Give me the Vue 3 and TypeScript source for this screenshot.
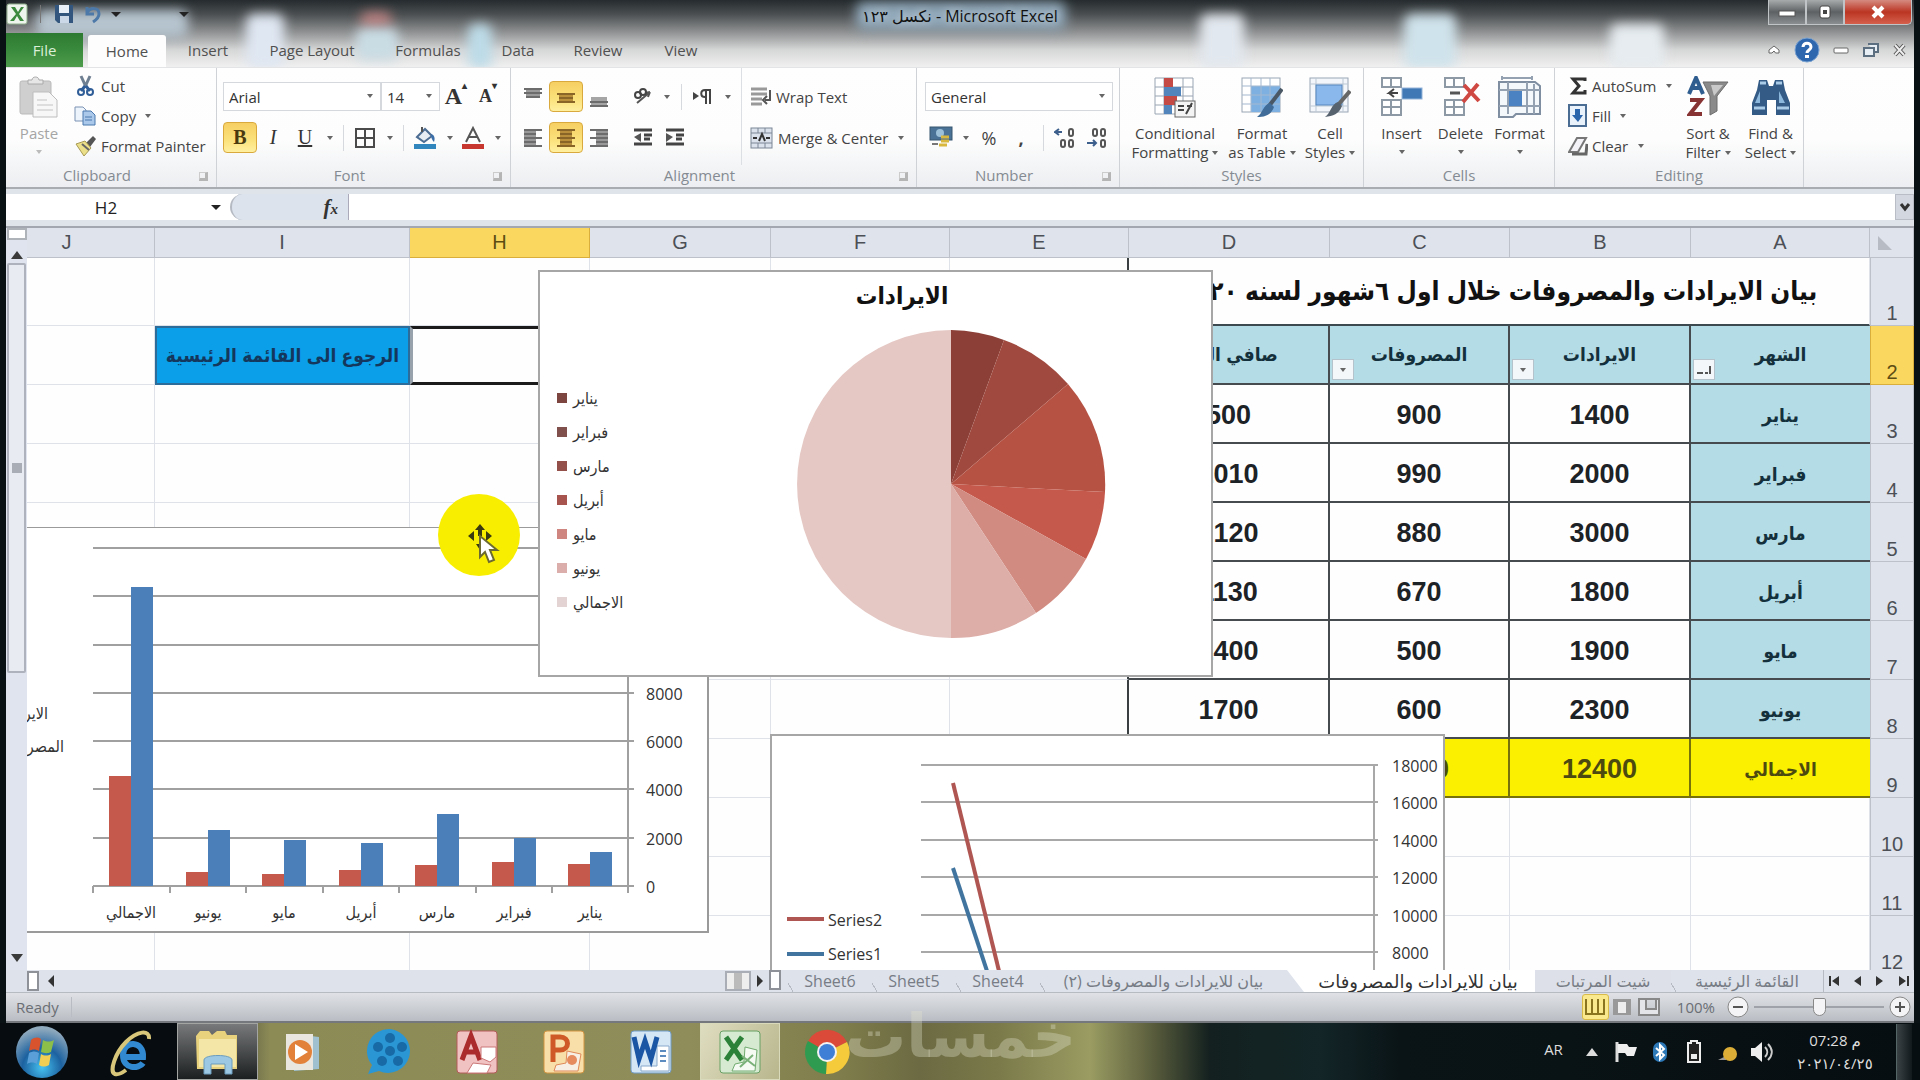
<script setup lang="ts">
interface SheetRow {
  num: number
  cells: string[]
  kind: 'head' | 'data' | 'total' | 'blank'
}

const columns: string[] = ['J', 'I', 'H', 'G', 'F', 'E', 'D', 'C', 'B', 'A']
const ribbonTabs: string[] = ['Insert', 'Page Layout', 'Formulas', 'Data', 'Review', 'View']

// Cells are listed in visual order: D, C, B, A
const rows: SheetRow[] = [
  { num: 2, kind: 'head', cells: ['صافي الربح', 'المصروفات', 'الايرادات', 'الشهر'] },
  { num: 3, kind: 'data', cells: ['500', '900', '1400', 'يناير'] },
  { num: 4, kind: 'data', cells: ['1010', '990', '2000', 'فبراير'] },
  { num: 5, kind: 'data', cells: ['2120', '880', '3000', 'مارس'] },
  { num: 6, kind: 'data', cells: ['1130', '670', '1800', 'أبريل'] },
  { num: 7, kind: 'data', cells: ['1400', '500', '1900', 'مايو'] },
  { num: 8, kind: 'data', cells: ['1700', '600', '2300', 'يونيو'] },
  { num: 9, kind: 'total', cells: ['7860', '4540', '12400', 'الاجمالي'] },
  { num: 10, kind: 'blank', cells: ['', '', '', ''] },
  { num: 11, kind: 'blank', cells: ['', '', '', ''] },
  { num: 12, kind: 'blank', cells: ['', '', '', ''] },
]

const months: string[] = ['يناير', 'فبراير', 'مارس', 'أبريل', 'مايو', 'يونيو', 'الاجمالي']
const income: number[] = [1400, 2000, 3000, 1800, 1900, 2300, 12400]
const expenses: number[] = [900, 990, 880, 670, 500, 600, 4540]

const pieColors: string[] = ['#8b3f36', '#a04a3f', '#b65243', '#c5594b', '#d18b81', '#ddada7', '#e5c8c4']
const legendColors: string[] = ['#7d4540', '#80504c', '#93504b', '#a8544e', '#cf8580', '#dcaeab', '#e3d4d3']
const pieTotal = income.reduce((a, b) => a + b, 0)
const slices = income.map((value, i) => {
  const before = income.slice(0, i).reduce((a, b) => a + b, 0)
  const a0 = (before / pieTotal) * Math.PI * 2
  const a1 = ((before + value) / pieTotal) * Math.PI * 2
  const r = 154
  const pt = (a: number): string => `${Math.round(413 + r * Math.sin(a))} ${Math.round(214 - r * Math.cos(a))}`
  return { d: `M413 214L${pt(a0)}A${r} ${r} 0 0 1 ${pt(a1)}Z`, color: pieColors[i] }
})

const base = 359
const scale = (v: number): number => Math.round((v * 338) / 14000)
const bars = months.map((name, i) => {
  const slot = 66 + Math.round((6 - i) * 76.5)
  return { name, slot, low: scale(expenses[i]), high: scale(income[i]) }
})
const barLines = [14000, 12000, 10000, 8000, 6000, 4000, 2000, 0].map((v) => ({ v, y: base - scale(v) }))
const lineTicks = [18000, 16000, 14000, 12000, 10000, 8000].map((v, i) => ({ v, y: 31 + Math.round(i * 37.4) }))
</script>

<template>
  <div class="desktop">
    <div class="window">
      <header class="chrome">
        <i class="spot s1"></i><i class="spot s2"></i><i class="spot s3"></i><i class="spot s4"></i>
        <i class="spot s5"></i><i class="spot s6"></i><i class="spot s7"></i><i class="spot s8"></i><i class="spot s9"></i>
        <div class="titlebar">
          <div class="quick">
            <svg width="22" height="22" viewBox="0 0 22 22"><rect x="1" y="1" width="20" height="20" rx="2" fill="#eef5ec" stroke="#8fae8c" /><path d="M5 4h4l3 5 3-5h3l-5 7 5 7h-4l-3-5-3 5H4l6-7z" fill="#3c8a3e" /></svg>
            <span class="vsep"></span>
            <button class="plain" aria-label="Save"><svg width="22" height="22" viewBox="0 0 22 22"><path d="M2 2h18v18H5l-3-3z" fill="#33567f" /><rect x="6" y="2" width="10" height="8" fill="#e9f0f8" /><rect x="7" y="13" width="9" height="7" fill="#cbd8e8" /></svg></button>
            <button class="plain" aria-label="Undo"><svg width="20" height="20" viewBox="0 0 20 20"><path d="M4 3v7h7M4 9c3-6 12-6 12 1 0 4-3 6-6 8" fill="none" stroke="#4d79a8" stroke-width="3" /></svg></button>
            <i class="caret dark"></i>
            <i class="caret dark far"></i>
          </div>
          <h1>نكسل ١٢٣ - Microsoft Excel</h1>
          <div class="wincontrols">
            <button aria-label="Minimize"><svg width="18" height="12" viewBox="0 0 18 12"><rect x="1" y="5" width="16" height="5" fill="#fff" stroke="#555" /></svg></button>
            <button aria-label="Maximize"><svg width="16" height="16" viewBox="0 0 16 16"><rect x="3" y="2" width="10" height="12" rx="2" fill="#fff" stroke="#444" /><path d="M6 6h4v4H6z" fill="#444" /></svg></button>
            <button class="close" aria-label="Close"><svg width="16" height="14" viewBox="0 0 16 14"><path d="M3 2l10 10M13 2L3 12" stroke="#fff" stroke-width="4" /></svg></button>
          </div>
        </div>
        <nav class="tabs">
          <button class="file">File</button>
          <button class="home">Home</button>
          <button v-for="t in ribbonTabs" :key="t" :class="'t-' + t.slice(0, 4).toLowerCase()">{{ t }}</button>
          <div class="docs">
            <svg width="16" height="16" viewBox="0 0 16 16"><path d="M3 11V8l5-4 5 4v3H9.500L8 9l-2 2z" fill="#fff" stroke="#666" /></svg>
            <svg width="26" height="26" viewBox="0 0 26 26"><circle cx="13" cy="13" r="12" fill="#2f67ae" stroke="#7ba3d2" /><path d="M9 10c0-5 8-5 8 0 0 3-4 3-4 6" fill="none" stroke="#fff" stroke-width="3" /><rect x="11" y="18" width="4" height="3" fill="#fff" /></svg>
            <svg width="18" height="16" viewBox="0 0 18 16"><rect x="2" y="6" width="14" height="5" rx="1" fill="#fff" stroke="#666" /></svg>
            <svg width="18" height="16" viewBox="0 0 18 16"><path d="M6 2h10v8h-3M2 6h10v8H2z" fill="#e8f0f6" stroke="#5b6f80" stroke-width="2" /></svg>
            <svg width="16" height="16" viewBox="0 0 16 16"><path d="M3 3l9 10M12 3L3 13" stroke="#555" stroke-width="4" /><path d="M3 3l9 10M12 3L3 13" stroke="#eee" stroke-width="2" /></svg>
          </div>
        </nav>
      </header>

      <section class="ribbon">
        <div class="group g-clip">
          <div class="body">
            <button class="big paste">
              <svg width="40" height="42" viewBox="0 0 40 42"><rect x="1" y="5" width="31" height="33" rx="2" fill="#cfcfcf" stroke="#b9b9b9" /><path d="M9 8V4h4c0-4 7-4 7 0h4v4z" fill="#e6e6e6" stroke="#aaa" /><path d="M14 16h16l8 8v17H14z" fill="#f7f7f7" stroke="#bdbdbd" /><path d="M18 24h10M18 29h16M18 34h16" stroke="#ddd" stroke-width="2" /></svg>
              <span>Paste</span><i class="caret pale"></i>
            </button>
            <div class="stack">
              <button class="line"><svg width="24" height="22" viewBox="0 0 24 22"><path d="M8 1l5 11M17 1l-5 11" stroke="#6f7f92" stroke-width="3" /><path d="M12 11l-4 5M13 11l4 5" stroke="#2f5d97" stroke-width="3" /><circle cx="8" cy="17" r="3" fill="none" stroke="#2f5d97" stroke-width="2" /><circle cx="17" cy="17" r="3" fill="none" stroke="#2f5d97" stroke-width="2" /></svg>Cut</button>
              <button class="line"><svg width="24" height="22" viewBox="0 0 24 22"><path d="M2 2h8l3 3v11H2z" fill="#eef4fb" stroke="#7b93b4" /><path d="M10 6h8l4 4v10H10z" fill="#a9c8ea" stroke="#4b78ae" /><path d="M12 12h7M12 15h7" stroke="#4b78ae" /></svg>Copy<i class="caret"></i></button>
              <button class="line"><svg width="24" height="22" viewBox="0 0 24 22"><path d="M13 8l7-7 3 3-6 8z" fill="#555" /><path d="M3 9l9-3 6 7-7 8z" fill="#ecdf8a" stroke="#a79a54" /><path d="M9 9l7 6" stroke="#666" stroke-width="2" /></svg>Format Painter</button>
            </div>
          </div>
          <div class="label">Clipboard<i class="launch"></i></div>
        </div>

        <div class="group g-font">
          <div class="body rows">
            <div class="row">
              <span class="combo w-face"><select aria-label="Font"><option>Arial</option></select><i class="caret"></i></span>
              <span class="combo w-size"><select aria-label="Font size"><option>14</option></select><i class="caret"></i></span>
              <button class="ic serif grow">A<sup>▴</sup></button>
              <button class="ic serif shrink">A<sup>▾</sup></button>
            </div>
            <div class="row">
              <button class="ic on serif"><b>B</b></button>
              <button class="ic serif"><i>I</i></button>
              <button class="ic serif"><u>U</u></button>
              <i class="caret wide"></i><span class="sep"></span>
              <button class="ic" aria-label="Borders"><svg width="20" height="20" viewBox="0 0 20 20"><path d="M1 1h18v18H1zM10 1v18M1 10h18" fill="none" stroke="#4a4a4a" stroke-width="2" /></svg></button>
              <i class="caret wide"></i><span class="sep"></span>
              <button class="ic" aria-label="Fill color"><svg width="24" height="24" viewBox="0 0 24 24"><path d="M4 11l8-8 7 7-8 6z" fill="#e8edf3" stroke="#4d6d93" stroke-width="2" /><path d="M9 6V1" stroke="#555" stroke-width="2" /><path d="M18 8c4 1 4 5 3 8-2-2-3-4-3-8z" fill="#3a6ea8" /><rect x="1" y="18" width="22" height="5" fill="#3187bd" /></svg></button>
              <i class="caret wide"></i>
              <button class="ic" aria-label="Font color"><svg width="24" height="24" viewBox="0 0 24 24"><path d="M5 16L12 2l7 14M8 11h8" fill="none" stroke="#555" stroke-width="2" /><rect x="1" y="18" width="22" height="5" fill="#c7372f" /></svg></button>
              <i class="caret wide"></i>
            </div>
          </div>
          <div class="label">Font<i class="launch"></i></div>
        </div>

        <div class="group g-align">
          <div class="body">
            <div class="rows half">
              <div class="row">
                <button class="ic" aria-label="Top align"><svg width="20" height="22" viewBox="0 0 20 22"><path d="M3 4h14v8H3z" fill="#9a9a9a" /><path d="M1 3h18M1 7h18M3 11h14" stroke="#6c6c6c" stroke-width="2" /></svg></button>
                <button class="ic on" aria-label="Middle align"><svg width="20" height="22" viewBox="0 0 20 22"><path d="M3 7h14v10H3z" fill="#b98f3c" /><path d="M1 8h18M3 12h14M1 16h18" stroke="#8a6528" stroke-width="2" /></svg></button>
                <button class="ic" aria-label="Bottom align"><svg width="20" height="22" viewBox="0 0 20 22"><path d="M2 11h16v9H2z" fill="#a5a5a5" /><path d="M1 16h18M1 20h18" stroke="#6c6c6c" stroke-width="2" /></svg></button>
                <button class="ic push" aria-label="Orientation"><svg width="22" height="22" viewBox="0 0 22 22"><path d="M5 17L18 6M18 6l-5 1M18 6l-2 5" stroke="#555" stroke-width="2" fill="none" /><circle cx="6" cy="9" r="3" fill="none" stroke="#444" stroke-width="2" /><circle cx="11" cy="6" r="3" fill="none" stroke="#444" stroke-width="2" /></svg></button>
                <i class="caret"></i><span class="sep"></span>
                <button class="ic" aria-label="Text direction"><svg width="22" height="20" viewBox="0 0 22 20"><path d="M1 5l6 4-6 4z" fill="#444" /><path d="M19 3h-6c-5 0-5 7 0 7M14 3v14M18 3v14" fill="none" stroke="#444" stroke-width="2" /></svg></button>
                <i class="caret wide"></i>
              </div>
              <div class="row">
                <button class="ic" aria-label="Align left"><svg width="20" height="22" viewBox="0 0 20 22"><path d="M1 3h12v16H1z" fill="#999" /><path d="M1 3h18M1 7h12M1 11h18M1 15h12M1 19h18" stroke="#6c6c6c" stroke-width="2" /></svg></button>
                <button class="ic on" aria-label="Center"><svg width="20" height="22" viewBox="0 0 20 22"><path d="M4 3h12v16H4z" fill="#b98f3c" /><path d="M1 3h18M4 7h12M1 11h18M4 15h12M1 19h18" stroke="#8a6528" stroke-width="2" /></svg></button>
                <button class="ic" aria-label="Align right"><svg width="20" height="22" viewBox="0 0 20 22"><path d="M7 3h12v16H7z" fill="#999" /><path d="M1 3h18M7 7h12M1 11h18M7 15h12M1 19h18" stroke="#6c6c6c" stroke-width="2" /></svg></button>
                <button class="ic push" aria-label="Decrease indent"><svg width="22" height="20" viewBox="0 0 22 20"><path d="M2 2h18M12 7h8M12 11h6M2 16h18" stroke="#444" stroke-width="3" /><path d="M9 5v9L2 9z" fill="#555" /></svg></button>
                <button class="ic" aria-label="Increase indent"><svg width="22" height="20" viewBox="0 0 22 20"><path d="M2 2h18M12 7h8M12 11h6M2 16h18" stroke="#444" stroke-width="3" /><path d="M2 5v9l7-5z" fill="#555" /></svg></button>
              </div>
            </div>
            <div class="rows merge">
              <div class="row"><button class="line"><svg width="22" height="22" viewBox="0 0 22 22"><path d="M1 3h16M1 8h16M1 13h11M1 18h11" stroke="#999" stroke-width="3" /><path d="M20 4v10h-5M17 10l-4 4 4 4" fill="none" stroke="#555" stroke-width="2" /></svg>Wrap Text</button></div>
              <div class="row"><button class="line"><svg width="24" height="22" viewBox="0 0 24 22"><rect x="1" y="1" width="21" height="20" fill="#dbe2ec" stroke="#7c8796" /><path d="M1 6h21M1 16h21M8 1v5M15 1v5M8 16v5M15 16v5" stroke="#7c8796" /><path d="M3 11h4M20 11h-4M9 14l3-7 3 7" stroke="#333" stroke-width="2" fill="none" /></svg>Merge &amp; Center<i class="caret wide"></i></button></div>
            </div>
          </div>
          <div class="label">Alignment<i class="launch"></i></div>
        </div>

        <div class="group g-num">
          <div class="body rows">
            <div class="row"><span class="combo w-num"><select aria-label="Number format"><option>General</option></select><i class="caret"></i></span></div>
            <div class="row">
              <button class="ic" aria-label="Accounting format"><svg width="24" height="26" viewBox="0 0 24 26"><rect x="1" y="2" width="22" height="13" fill="#4a7296" stroke="#36566f" /><circle cx="11" cy="8" r="4" fill="#9cc0d8" /><path d="M12 12h8M12 16h8M10 20h8" stroke="#d9b840" stroke-width="3" /><path d="M3 19h6" stroke="#777" stroke-width="2" /></svg></button>
              <i class="caret wide"></i>
              <button class="ic pct">%</button>
              <button class="ic pct"><b>,</b></button>
              <span class="sep"></span>
              <button class="ic tiny" aria-label="Increase decimal"><svg width="22" height="22" viewBox="0 0 22 22"><path d="M8 5H1l4-3M1 5l4 3" stroke="#3c5f8c" stroke-width="2" fill="none" /><rect x="15" y="2" width="4" height="7" rx="2" fill="none" stroke="#555" stroke-width="2" /><rect x="7" y="13" width="4" height="7" rx="2" fill="none" stroke="#555" stroke-width="2" /><rect x="15" y="13" width="4" height="7" rx="2" fill="none" stroke="#555" stroke-width="2" /></svg></button>
              <button class="ic tiny" aria-label="Decrease decimal"><svg width="22" height="22" viewBox="0 0 22 22"><rect x="7" y="2" width="4" height="7" rx="2" fill="none" stroke="#555" stroke-width="2" /><rect x="15" y="2" width="4" height="7" rx="2" fill="none" stroke="#555" stroke-width="2" /><path d="M1 16h9M7 13l3 3-3 3" stroke="#3c5f8c" stroke-width="2" fill="none" /><rect x="15" y="13" width="4" height="7" rx="2" fill="none" stroke="#555" stroke-width="2" /></svg></button>
            </div>
          </div>
          <div class="label">Number<i class="launch"></i></div>
        </div>

        <div class="group g-styles">
          <div class="body">
            <button class="big b-cond">
              <svg width="42" height="42" viewBox="0 0 42 42"><path d="M1 2h38v36H1zM1 11h38M1 20h38M1 29h38M10 2v36M29 2v36" fill="#fff" stroke="#9aa5b3" /><rect x="10" y="2" width="9" height="9" fill="#c44a45" /><rect x="10" y="11" width="17" height="9" fill="#5185bb" /><rect x="10" y="20" width="13" height="9" fill="#c44a45" /><rect x="10" y="29" width="8" height="9" fill="#5185bb" /><rect x="21" y="25" width="20" height="16" fill="#f4f4f4" stroke="#666" /><path d="M24 30h6M24 34h6M32 38l6-11M33 30h5" stroke="#444" stroke-width="2" /></svg>
              <span>Conditional</span><span>Formatting <i class="caret"></i></span>
            </button>
            <button class="big b-fmt">
              <svg width="42" height="42" viewBox="0 0 42 42"><rect x="1" y="2" width="38" height="34" fill="#fff" stroke="#9aa5b3" /><rect x="10" y="10" width="29" height="26" fill="#7fb0e2" /><path d="M1 10h38M1 19h38M1 28h38M10 2v34M20 2v34M29 2v34" stroke="#a3b7cf" /><path d="M41 13L28 30" stroke="#4a5866" stroke-width="4" /><path d="M29 27l4 4c-3 8-9 10-17 10 6-4 6-12 13-14z" fill="#3f6c98" /></svg>
              <span>Format</span><span>as Table <i class="caret"></i></span>
            </button>
            <button class="big b-cell">
              <svg width="42" height="42" viewBox="0 0 42 42"><rect x="1" y="2" width="38" height="34" fill="#f3f6fa" stroke="#9aa5b3" /><path d="M1 8h38M1 30h38M7 2v34M34 2v34" stroke="#bcc7d4" /><rect x="7" y="9" width="26" height="20" fill="#8ab8ec" stroke="#5486bd" /><path d="M41 15L29 29" stroke="#666" stroke-width="4" /><path d="M29 26l4 4c-3 8-9 10-17 11 6-4 6-13 13-15z" fill="#56626e" /></svg>
              <span>Cell</span><span>Styles <i class="caret"></i></span>
            </button>
          </div>
          <div class="label">Styles</div>
        </div>

        <div class="group g-cells">
          <div class="body">
            <button class="big">
              <svg width="42" height="42" viewBox="0 0 42 42"><path d="M1 2h19v9H1zM10 2v9M1 24h19v15H1zM10 24v15M1 31h19" fill="#fff" stroke="#8e99a6" stroke-width="2" /><rect x="21" y="12" width="20" height="11" fill="#3f78b5" stroke="#93b4d8" /><path d="M17 17H8l5-4M8 17l5 4" stroke="#444" stroke-width="2" fill="none" /></svg>
              <span>Insert</span><i class="caret"></i>
            </button>
            <button class="big">
              <svg width="42" height="42" viewBox="0 0 42 42"><path d="M5 2h19v9H5zM14 2v9M5 24h19v15H5zM14 24v15M5 31h19" fill="#fff" stroke="#8e99a6" stroke-width="2" /><path d="M10 17h10" stroke="#555" stroke-width="3" /><path d="M24 9l15 16M38 8L23 26" stroke="#cf4842" stroke-width="4" /></svg>
              <span>Delete</span><i class="caret"></i>
            </button>
            <button class="big">
              <svg width="44" height="42" viewBox="0 0 44 42"><path d="M1 6h36l5 4v28H18l-3 3H1z" fill="#f5f8fb" stroke="#7f8fa1" stroke-width="2" /><path d="M10 6v32M29 6v32M36 8v30M1 14h41M1 30h41M4 2h30M4 0v4M34 0v4" stroke="#93a1b1" stroke-width="2" /><rect x="11" y="15" width="13" height="15" fill="#4b82c2" /></svg>
              <span>Format</span><i class="caret"></i>
            </button>
          </div>
          <div class="label">Cells</div>
        </div>

        <div class="group g-edit">
          <div class="body">
            <div class="stack">
              <button class="line"><svg width="20" height="20" viewBox="0 0 20 20"><path d="M17 5V3H5l6 7-6 7h12v-3" fill="none" stroke="#333" stroke-width="3" /></svg>AutoSum<i class="caret wide"></i></button>
              <button class="line"><svg width="20" height="24" viewBox="0 0 20 24"><rect x="1" y="1" width="17" height="21" fill="#e9f1fa" stroke="#4b6c93" stroke-width="2" /><path d="M7 5h5v6h3l-5 7-6-7h3z" fill="#2a64aa" /></svg>Fill<i class="caret"></i></button>
              <button class="line"><svg width="20" height="20" viewBox="0 0 20 20"><path d="M9 2h9l-8 14H1z" fill="#f4f4f8" stroke="#777" stroke-width="2" /><path d="M4 18h14l1-10" stroke="#666" stroke-width="3" fill="none" /></svg>Clear<i class="caret wide"></i></button>
            </div>
            <button class="big b-sort">
              <svg width="42" height="42" viewBox="0 0 42 42"><path d="M16 6h25L30 20v15l-7 4V20z" fill="#8a8a8a" stroke="#6d6d6d" /><path d="M24 9h12l-9 11" fill="#c9c9c9" /><path d="M2 18L9 2l7 16M5 12h8" fill="none" stroke="#2f5d90" stroke-width="4" /><path d="M3 24h11L3 38h12" fill="none" stroke="#833" stroke-width="4" /></svg>
              <span>Sort &amp;</span><span>Filter <i class="caret"></i></span>
            </button>
            <button class="big b-find">
              <svg width="42" height="42" viewBox="0 0 42 42"><path d="M9 4h8l2 6h4l2-6h8l2 10 5 13v12H26V24h-9v15H2V27L7 14z" fill="#335b85" /><path d="M5 27l5-12v12M29 15l6 12h-6" fill="#8db8de" /><path d="M4 32h11M27 32h12M10 7h6M26 7h6" stroke="#a9cbe8" stroke-width="3" /></svg>
              <span>Find &amp;</span><span>Select <i class="caret"></i></span>
            </button>
          </div>
          <div class="label">Editing</div>
        </div>
      </section>

      <section class="formula">
        <div class="namebox"><input aria-label="Name box" value="H2"><i class="caret black"></i></div>
        <div class="fxarea"><i class="round"></i><em>f<small>x</small></em></div>
        <input class="fxinput" aria-label="Formula">
        <button class="expand" aria-label="Expand formula bar"><svg width="12" height="10" viewBox="0 0 12 10"><path d="M2 2l4 5 4-5" fill="none" stroke="#333" stroke-width="3" /></svg></button>
      </section>

      <section class="sheet">
        <div class="vscroll">
          <i class="split"></i><i class="up"></i>
          <div class="thumb"><i class="grip"></i></div>
          <i class="down"></i>
        </div>
        <div class="grid">
          <table>
            <colgroup>
              <col><col class="c255"><col class="c180"><col class="c181"><col class="c179"><col class="c179"><col class="c201"><col class="c180"><col class="c181"><col class="c179"><col class="c44">
            </colgroup>
            <thead>
              <tr><th v-for="c in columns" :key="c" scope="col" :class="{ sel: c === 'H' }">{{ c }}</th><th class="corner" aria-label="Select all"><i></i></th></tr>
            </thead>
            <tbody>
              <tr class="first">
                <td v-for="n in 5" :key="n"></td><td class="edge"></td>
                <td colspan="4" class="title" dir="rtl">بيان الايرادات والمصروفات خلال اول ٦شهور لسنه ٢٠٢٠</td>
                <th scope="row">1</th>
              </tr>
              <tr v-for="r in rows" :key="r.num" :class="r.kind">
                <td></td>
                <td v-if="r.num === 2" class="link"><a href="#home" dir="rtl">الرجوع الى القائمة الرئيسية</a></td><td v-else></td>
                <td :class="{ active: r.num === 2 }"></td>
                <td></td><td></td><td :class="{ edge: r.kind !== 'blank' }"></td>
                <td v-for="(c, i) in r.cells" :key="i" :class="{ month: i === 3 && r.kind !== 'blank', val: r.kind !== 'blank' }">
                  {{ c }}<button v-if="r.kind === 'head' && i > 0" class="filter" aria-label="Filter"><i v-if="i < 3" class="caret"></i><svg v-else width="16" height="14" viewBox="0 0 16 14"><path d="M1 10h6M9 10h3M14 3v8" stroke="#555" stroke-width="2" /></svg></button>
                </td>
                <th scope="row" :class="{ sel: r.num === 2 }">{{ r.num }}</th>
              </tr>
            </tbody>
          </table>

          <svg class="chart barchart" width="682" height="406" viewBox="0 0 682 406">
            <rect x="-1" y="0" width="682" height="405" fill="#fff" stroke="#9a9a9a" stroke-width="2" />
            <g stroke="#a0a0a0" stroke-width="2">
              <path v-for="l in barLines" :key="l.v" :d="`M66 ${l.y}H607`" />
              <path d="M601 21V366" />
              <path v-for="b in bars" :key="b.slot" :d="`M${b.slot} 359v7`" />
            </g>
            <g v-for="b in bars" :key="b.name">
              <rect :x="b.slot + 16" :y="base - b.low" width="22" :height="b.low" fill="#c5594b" />
              <rect :x="b.slot + 38" :y="base - b.high" width="22" :height="b.high" fill="#4a7fba" />
              <text :x="b.slot + 38" y="391" text-anchor="middle">{{ b.name }}</text>
            </g>
            <text v-for="l in barLines" :key="l.v" x="619" :y="l.y + 7">{{ l.v }}</text>
            <text x="21" y="192" text-anchor="end">الايرادات</text>
            <text x="37" y="225" text-anchor="end">المصروفات</text>
          </svg>

          <svg class="chart piechart" width="675" height="407" viewBox="0 0 675 407">
            <rect x="1" y="1" width="673" height="405" fill="#fff" stroke="#a6a6a6" stroke-width="2" />
            <text class="ctitle" x="364" y="34" text-anchor="middle">الايرادات</text>
            <path v-for="(s, i) in slices" :key="i" :d="s.d" :fill="s.color" />
            <g v-for="(m, i) in months" :key="m">
              <rect x="19" :y="123 + i * 34" width="10" height="10" :fill="legendColors[i]" />
              <text x="35" :y="134 + i * 34">{{ m }}</text>
            </g>
          </svg>

          <svg class="chart linechart" width="675" height="237" viewBox="0 0 675 237">
            <path d="M1 240V1H674V240" fill="#fff" stroke="#a6a6a6" stroke-width="2" />
            <g stroke="#a8a8a8" stroke-width="2">
              <path v-for="t in lineTicks" :key="t.v" :d="`M151 ${t.y}H608`" />
              <path d="M604 31V237" />
            </g>
            <path d="M183 49L229 237" stroke="#b05652" stroke-width="4" />
            <path d="M183 134L217 237" stroke="#41759f" stroke-width="4" />
            <path d="M17 185h37" stroke="#b05652" stroke-width="4" />
            <path d="M17 220h37" stroke="#41759f" stroke-width="4" />
            <text x="58" y="192">Series2</text>
            <text x="58" y="226">Series1</text>
            <text v-for="t in lineTicks" :key="t.v" x="622" :y="t.y + 7">{{ t.v }}</text>
          </svg>

          <svg class="pointer" width="84" height="84" viewBox="0 0 84 84">
            <circle cx="42" cy="42" r="41" fill="#f8ef00" />
            <path d="M43 31l5 6h-3v6h-4v-6h-3zM31 43l6-5v10zM55 43l-6-5v10zM43 57l-4-6h7z" fill="#3a3a10" />
            <path d="M43 43v21l5-5 4 10 5-2-4-10h7z" fill="#fff" stroke="#6c6a30" stroke-width="2" />
          </svg>
        </div>
      </section>

      <section class="sheettabs">
        <div class="hscroll"><i class="mini"></i><i class="left"></i><span class="fill"></span><i class="hthumb"></i><i class="right"></i></div>
        <i class="mini"></i>
        <button class="st">Sheet6</button><button class="st">Sheet5</button><button class="st">Sheet4</button>
        <button class="st wide" dir="rtl">بيان للايرادات والمصروفات (٢)</button>
        <button class="st current" dir="rtl">بيان للايرادات والمصروفات</button>
        <button class="st pay" dir="rtl">شيت المرتبات</button>
        <button class="st main" dir="rtl">القائمة الرئيسية</button>
        <div class="nav">
          <svg width="84" height="12" viewBox="0 0 84 12"><path d="M3 1v10M81 1v10" stroke="#333" stroke-width="2" /><path d="M12 1v10L5 6zM34 1v10l-7-5zM49 1v10l7-5zM72 1v10l7-5z" fill="#333" /></svg>
        </div>
      </section>

      <footer class="status">
        <span class="ready">Ready</span>
        <div class="view">
          <button class="vb on" aria-label="Normal view"><svg width="20" height="18" viewBox="0 0 20 18"><path d="M1 1v15h18V1M7 1v15M13 1v15" fill="none" stroke="#8b7420" stroke-width="2" /></svg></button>
          <button class="vb" aria-label="Page layout view"><svg width="20" height="18" viewBox="0 0 20 18"><rect x="1" y="1" width="18" height="16" fill="#999" /><rect x="6" y="4" width="8" height="11" fill="#eee" /></svg></button>
          <button class="vb" aria-label="Page break view"><svg width="22" height="18" viewBox="0 0 22 18"><path d="M1 1h20v16H1zM8 1v10h10V1" fill="#e3e5e8" stroke="#888" stroke-width="2" /></svg></button>
          <span class="pc">100%</span>
          <button class="zoom" aria-label="Zoom out"><svg width="22" height="22" viewBox="0 0 22 22"><circle cx="11" cy="11" r="10" fill="#f4f4f6" stroke="#888" /><path d="M6 11h10" stroke="#555" stroke-width="2" /></svg></button>
          <input type="range" aria-label="Zoom" min="0" max="100" value="50">
          <button class="zoom" aria-label="Zoom in"><svg width="22" height="22" viewBox="0 0 22 22"><circle cx="11" cy="11" r="10" fill="#f4f4f6" stroke="#888" /><path d="M6 11h10M11 6v10" stroke="#555" stroke-width="2" /></svg></button>
        </div>
      </footer>
    </div>

    <div class="taskbar">
      <button class="tk start" aria-label="Start"><svg width="54" height="54" viewBox="0 0 54 54"><defs><radialGradient id="orb" cx="50%" cy="80%" r="75%"><stop offset="0" stop-color="#45c1f0" /><stop offset="0.5" stop-color="#1c62a0" /><stop offset="1" stop-color="#8fa9bd" /></radialGradient></defs><circle cx="27" cy="27" r="26" fill="url(#orb)" /><path d="M16 15c4-3 7-3 10-1l-2 12c-3-2-7-2-10 0z" fill="#d9532c" /><path d="M28 15c4 2 7 2 11 0l-3 12c-4 2-7 1-10 0z" fill="#8cbf4a" /><path d="M14 28c4-2 7-2 10 0l-2 11c-3-2-7-2-10 0z" fill="#5a9fd8" /><path d="M26 29c3 2 7 2 10 0l-2 11c-4 2-7 2-10 0z" fill="#f2cf52" /></svg></button>
      <button class="tk ie" aria-label="Internet Explorer"><svg width="48" height="50" viewBox="0 0 48 50"><path d="M36 36c-4 6-20 7-20-8s21-15 20 2H19" fill="none" stroke="#3189d2" stroke-width="6" /><path d="M42 12c1-10-12-8-23 3S2 45 8 47c3 1 7-1 11-4" fill="none" stroke="#d8c77a" stroke-width="4" /></svg></button>
      <button class="tk folder" aria-label="Explorer"><svg width="48" height="48" viewBox="0 0 48 48"><path d="M2 8l4-5h9l3 4 5-4h8l2 4h10v34H3z" fill="#e9d27e" /><path d="M5 11h37v28H5z" fill="#f4e6a6" /><path d="M10 46V32c0-6 28-6 28 0v14h-7V36H17v10z" fill="#9cc8e4" stroke="#6b9cbd" /></svg></button>
      <button class="tk" aria-label="Media Player"><svg width="42" height="42" viewBox="0 0 42 42"><path d="M12 3l25 3v32l-25 2z" fill="#9fc0cf" /><rect x="4" y="3" width="27" height="36" fill="#e8e6df" /><circle cx="18" cy="21" r="12" fill="#e2813a" /><path d="M13 13l13 8-13 8z" fill="#fff" /></svg></button>
      <button class="tk" aria-label="Video"><svg width="48" height="48" viewBox="0 0 48 48"><path d="M24 1a22 22 0 1 1-11 42L2 46l4-9A22 22 0 0 1 24 1z" fill="#2a96d4" /><g fill="#176aa5"><circle cx="24" cy="23" r="5" /><circle cx="24" cy="10" r="5" /><circle cx="36" cy="19" r="5" /><circle cx="32" cy="33" r="5" /><circle cx="16" cy="33" r="5" /><circle cx="12" cy="19" r="5" /></g></svg></button>
      <button class="tk" aria-label="Access"><svg width="44" height="46" viewBox="0 0 44 46"><rect x="2" y="2" width="40" height="42" rx="3" fill="#f0c3c2" stroke="#b25a58" /><path d="M7 31L16 7l9 24M10 23h12" fill="none" stroke="#ab2a2c" stroke-width="5" /><path d="M26 18h15v10l-6 5-9-4zM18 34l18 2-4 8H12z" fill="#fff" stroke="#c77" /></svg></button>
      <button class="tk" aria-label="PowerPoint"><svg width="44" height="46" viewBox="0 0 44 46"><rect x="2" y="2" width="40" height="42" rx="3" fill="#f8dfa9" stroke="#d39541" /><path d="M11 33V8h7c10 0 10 13 0 13h-6" fill="none" stroke="#cf5a28" stroke-width="5" /><path d="M25 22l14 3-3 17H12l2-6 10-2z" fill="#f7efe4" stroke="#df8a58" /><circle cx="30" cy="31" r="5" fill="#e58b5d" /></svg></button>
      <button class="tk" aria-label="Word"><svg width="44" height="46" viewBox="0 0 44 46"><rect x="2" y="2" width="40" height="42" rx="3" fill="#d5e6f5" stroke="#6f9cc9" /><path d="M28 17h12v25H12v-5h16z" fill="#fff" stroke="#88a9cc" /><path d="M5 8l5 22 6-18 6 18 6-22" fill="none" stroke="#1b56a5" stroke-width="5" /><path d="M31 22h6M31 27h6M31 32h6" stroke="#5d8cc0" stroke-width="2" /></svg></button>
      <button class="tk excel" aria-label="Excel"><svg width="44" height="46" viewBox="0 0 44 46"><rect x="2" y="2" width="40" height="42" rx="3" fill="#d5ead0" stroke="#68a064" /><path d="M8 8l16 23M24 8L8 31" stroke="#2a8137" stroke-width="5" /><path d="M27 18l12 3-2 21H14l3-7 9-2z" fill="#f5faf3" stroke="#71ab6f" /><path d="M24 27l13 10M35 26L22 38" stroke="#79b179" stroke-width="2" /></svg></button>
      <button class="tk gc" aria-label="Chrome"><svg width="46" height="50" viewBox="0 0 46 50"><path d="M23 25L4 14A22 22 0 0 1 43 15z" fill="#db4a38" /><path d="M23 25l20-10A22 22 0 0 1 22 47z" fill="#f6cb3b" /><path d="M23 25l-1 22A22 22 0 0 1 4 14z" fill="#2f9b50" /><circle cx="23" cy="25" r="10" fill="#f3f3f3" /><circle cx="23" cy="25" r="8" fill="#3f7fd6" /></svg></button>
      <span class="mark">خمسات</span>
      <div class="tray">
        <span class="lang">AR</span>
        <i class="ti"><svg width="14" height="10" viewBox="0 0 14 10"><path d="M7 1l6 8H1z" fill="#ddd" /></svg></i>
        <i class="ti"><svg width="24" height="22" viewBox="0 0 24 22"><path d="M3 1v20" stroke="#ddd" stroke-width="3" /><path d="M4 3h9l2 3h8l-3 9h-7l-2-3H4z" fill="#eee" /></svg></i>
        <i class="ti"><svg width="16" height="22" viewBox="0 0 16 22"><rect x="1" y="1" width="14" height="20" rx="7" fill="#2d78b7" /><path d="M4 7l8 7-4 4V4l4 4-8 7" fill="none" stroke="#fff" stroke-width="2" /></svg></i>
        <i class="ti"><svg width="16" height="24" viewBox="0 0 16 24"><path d="M5 3V1h6v2h3v19H2V3z" fill="#222" stroke="#eee" stroke-width="2" /><path d="M5 14h6v5H5z" fill="#eee" /></svg></i>
        <i class="ti"><svg width="22" height="20" viewBox="0 0 22 20"><path d="M1 18h8v-4z" fill="#999" /><circle cx="13" cy="12" r="7" fill="#dcae37" /></svg></i>
        <i class="ti"><svg width="24" height="22" viewBox="0 0 24 22"><path d="M1 7h4l7-6v20l-7-6H1z" fill="#eee" /><path d="M15 6c3 3 3 7 0 10M18 3c5 5 5 11 0 16" stroke="#ccc" stroke-width="2" fill="none" /></svg></i>
        <div class="clock"><span>07:28 م</span><span>٢٠٢١/٠٤/٢٥</span></div>
        <i class="peek"></i>
      </div>
    </div>
  </div>
</template>

<style>
body { margin: 0; background: #0a1114; }
</style>

<style scoped>
* { box-sizing: border-box; }
.desktop { min-height: 100vh; display: flex; flex-direction: column; background: #0a1114; font-family: "Open Sans", "DejaVu Sans", sans-serif; font-size: 15px; color: #444; overflow: hidden; }
button { font: inherit; color: inherit; background: none; border: 0; padding: 0; margin: 0; }
svg { display: block; flex: none; }
.window { flex: 1; margin: 0 6px; display: flex; flex-direction: column; }
.caret { display: inline-block; flex: none; width: 0; height: 0; border: 3px solid transparent; border-top: 4px solid #666; border-bottom: 0; margin: 0 5px; }
.caret.wide { margin: 0 4px 0 6px; }
.caret.pale { border-top-color: #bbb; }
.caret.dark, .caret.black { border-width: 5px; border-top: 5px solid #222; border-bottom: 0; }

.chrome { position: relative; overflow: hidden; background: linear-gradient(#252b2e 0, #4a4e50 14px, #8f9192 32px, #d6d7d7 50px, #efefef 66px); }
.spot { position: absolute; filter: blur(6px); border-radius: 8px; }
.s1 { left: 240px; top: 14px; width: 38px; height: 54px; background: #dfe7f2; }
.s2 { left: 354px; top: 12px; width: 32px; height: 16px; background: #b77e7e; }
.s3 { left: 350px; top: 28px; width: 42px; height: 32px; background: #c9dce4; }
.s4 { left: 462px; top: 24px; width: 24px; height: 44px; background: #bcdbe8; }
.s5 { left: 30px; top: 10px; width: 152px; height: 28px; background: #b6c4cf; }
.s6 { left: 1194px; top: 14px; width: 44px; height: 54px; background: #e2e8ef; }
.s7 { left: 1398px; top: 14px; width: 52px; height: 54px; background: #cfe3ec; }
.s8 { left: 1604px; top: 24px; width: 54px; height: 44px; background: #e6ecf0; }
.s9 { left: 850px; top: 2px; width: 210px; height: 28px; background: #8ea6b8; }
.titlebar { position: relative; height: 33px; display: flex; justify-content: space-between; }
.quick { display: flex; align-items: center; width: 400px; gap: 8px; height: 28px; }
.quick .caret { margin-right: 0; margin-left: 0; }
.quick .caret.far { margin-left: 50px; }
.vsep { width: 1px; height: 18px; background: #777; margin: 0 4px; }
h1 { margin: 0; font-size: 16px; font-weight: 400; line-height: 33px; color: #111; text-shadow: 0 0 8px #dfe6ee; }
.wincontrols { width: 400px; display: flex; justify-content: flex-end; height: 25px; padding-right: 2px; }
.wincontrols button { width: 38px; display: flex; align-items: center; justify-content: center; background: linear-gradient(#a8abac, #5d6163 50%, #8b8e90); border: 1px solid #c0c4c6; border-top: 0; }
.wincontrols .close { width: 68px; background: linear-gradient(#d58a80, #bb3523 50%, #d4604c); border-radius: 0 0 5px 0; }
.tabs { position: relative; display: flex; height: 34px; align-items: stretch; color: #505050; }
.tabs button { display: flex; align-items: center; justify-content: center; white-space: nowrap; }
.tabs .file { width: 77px; background: linear-gradient(#2c7a31, #3a8a3d 50%, #4e9c4c); color: #dcefd9; }
.tabs .home { width: 78px; margin: 2px 0 0 5px; background: #fdfdfd; border-radius: 3px 3px 0 0; }
.t-inse { width: 84px; }
.t-page { width: 124px; }
.t-form { width: 108px; }
.t-data { width: 72px; }
.t-revi { width: 88px; }
.t-view { width: 78px; }
.docs { margin-left: auto; padding-right: 6px; display: flex; align-items: center; gap: 12px; }

.ribbon { display: flex; height: 122px; background: linear-gradient(#fefefe, #fdfdfd 60%, #eceef1); border-bottom: 2px solid #a9adb2; border-top: 1px solid #e3e4e6; }
.group { display: flex; flex-direction: column; border-right: 1px solid #cfd3d8; white-space: nowrap; flex: none; }
.g-clip { width: 211px; }
.g-font { width: 294px; }
.g-align { width: 406px; }
.g-num { width: 203px; }
.g-styles { width: 244px; }
.g-cells { width: 191px; }
.g-edit { width: 249px; }
.body { height: 97px; display: flex; }
.rows { display: flex; flex-direction: column; gap: 10px; padding-top: 13px; }
.g-font .rows { padding-left: 6px; }
.row { display: flex; align-items: center; height: 31px; }
.label { position: relative; height: 22px; line-height: 20px; text-align: center; color: #858b92; padding-right: 28px; }
.g-styles .label, .g-cells .label, .g-edit .label { padding-right: 0; }
.launch { position: absolute; right: 8px; top: 7px; width: 9px; height: 9px; border: 1px solid #ccc; border-right: 3px solid #b5b5b5; border-bottom: 3px solid #b5b5b5; }
.stack { display: flex; flex-direction: column; padding-top: 3px; }
.g-clip .stack { padding-left: 1px; }
.g-edit .stack { padding-left: 13px; width: 120px; }
.line { display: flex; align-items: center; gap: 4px; height: 31px; }
.stack .line { height: 30px; }
.big { display: flex; flex-direction: column; align-items: center; padding-top: 8px; width: 59px; line-height: 19px; }
.big svg { margin-bottom: 6px; }
.big > .caret { margin-top: 7px; }
.big span .caret { margin: 0 0 3px; }
.paste { width: 66px; color: #a5a5a5; }
.b-cond { width: 98px; margin-left: 6px; }
.b-fmt { width: 76px; }
.b-cell { width: 60px; }
.g-cells .body { padding-left: 8px; }
.b-sort { width: 66px; }
.combo { position: relative; display: flex; height: 29px; }
.combo select { appearance: none; width: 100%; border: 1px solid #d5d9de; background: #fff; font: inherit; color: #333; padding: 0 5px; border-radius: 0; }
.combo .caret { position: absolute; right: 3px; top: 12px; }
.w-face { width: 158px; }
.w-size { width: 59px; }
.g-num .rows { padding-left: 8px; }
.w-num { width: 188px; }
.ic { width: 32px; height: 31px; display: flex; align-items: center; justify-content: center; flex: none; }
.ic.on { width: 34px; border: 1px solid #d9a93d; border-radius: 4px; background: linear-gradient(#f6cf62, #fbe27c 60%, #fff0a0); }
.g-font .ic.on { color: #4a3a10; }
.serif { font-family: "Liberation Serif", serif; font-size: 20px; color: #333; }
.grow { font-size: 24px; font-weight: 700; }
.shrink { font-size: 18px; font-weight: 700; }
.serif sup { font-size: 10px; line-height: 10px; align-self: flex-start; }
.sep { width: 1px; height: 26px; background: #d6d9dd; margin: 0 5px 0 6px; }
.push { margin-left: 12px; }
.half { width: 230px; padding-left: 6px; margin-bottom: 12px; }
.merge { padding-left: 8px; border-left: 1px solid #dcdfe3; }
.pct { font-size: 18px; }

.formula { display: flex; height: 39px; padding: 5px 0 6px; background: #dfe3ea; border-bottom: 2px solid #a3a8b0; }
.namebox { display: flex; align-items: center; width: 224px; background: #fff; }
.namebox input { flex: 1; min-width: 0; border: 0; padding: 0; text-align: center; font: 17px "Open Sans", sans-serif; color: #222; background: none; }
.namebox .caret { margin-right: 9px; }
.fxarea { flex: none; width: 119px; display: flex; justify-content: space-between; padding-right: 10px; background: linear-gradient(90deg, #fff 8px, #dde3ec 8px); border-right: 1px solid #aab; }
.round { width: 40px; border-radius: 14px 0 0 14px; background: #dde3ec; border-left: 2px solid #b5bac2; }
.fxarea em { font: italic bold 21px/26px "Liberation Serif", serif; color: #333; }
.fxarea small { font-size: 15px; }
.fxinput { flex: 1; border: 0; background: #fff; }
.expand { width: 19px; display: flex; align-items: center; justify-content: center; background: #d3d8e0; border: 1px solid #b9bec6; }

.sheet { flex: 1; display: flex; overflow: hidden; }
.vscroll { width: 21px; flex: none; background: #dfe4ee; display: flex; flex-direction: column; align-items: center; }
.split { width: 20px; height: 12px; background: #fff; border: 2px solid #aeb2b9; }
.up, .down { width: 0; height: 0; border: 6px solid transparent; }
.up { border-top: 0; border-bottom: 8px solid #3a3a3a; margin: 11px 0 4px; }
.down { border-bottom: 0; border-top: 8px solid #3a3a3a; margin: auto 0 8px; }
.thumb { width: 19px; height: 410px; background: #e9ebf2; border: 2px solid #aeb2bc; border-radius: 2px; display: flex; align-items: center; justify-content: center; }
.grip { width: 10px; height: 10px; background: #a9adb5; }
.grid { position: relative; flex: 1; background: #fefefe; overflow: hidden; }
table { width: 100%; margin-bottom: -5px; table-layout: fixed; border-collapse: separate; border-spacing: 0; font-family: "Liberation Sans", "DejaVu Sans Condensed", "DejaVu Sans", sans-serif; }
.c255 { width: 255px; }
.c201 { width: 201px; }
.c181 { width: 181px; }
.c180 { width: 180px; }
.c179 { width: 179px; }
.c44 { width: 44px; }
td, th { padding: 0; border: 0 solid #dfe2e8; border-right-width: 1px; border-bottom-width: 1px; overflow: hidden; white-space: nowrap; }
th { background: #dfe3ec; font-weight: 400; font-size: 20px; color: #4c5056; border-color: #bcc1ca; }
thead th { height: 30px; }
thead th:first-child { padding-right: 48px; }
th.sel { background: #fad860; color: #5d4d13; border-color: #d9ae3b; }
tbody th { vertical-align: bottom; line-height: 24px; border-left: 1px solid #bcc1ca; }
.corner i { display: block; margin-left: 8px; width: 0; height: 0; border: 7px solid transparent; border-left-color: #b7bbc3; border-bottom-color: #b7bbc3; }
tbody tr { height: 59px; }
tr.first { height: 68px; }
.edge { border-right: 2px solid #3a3f42; }
.title { border-bottom: 2px solid #3c4a4f; text-align: center; font-size: 26px; font-weight: 700; color: #111; }
.val { position: relative; text-align: center; font-size: 27px; font-weight: 700; color: #1c2226; border-right: 2px solid #454b4f; border-bottom: 2px solid #454b4f; }
.data .val, .total .val { padding-top: 4px; }
.head .val, .month { background: #b3dce6; }
.head .val, .val.month { font-size: 19px; color: #14303c; }
.val.month { border-right: 0; }
.total .val { background: #faf000; color: #4d4a10; border-color: #77720a; }
.filter { position: absolute; left: 2px; bottom: 3px; width: 22px; height: 21px; background: #f4f7fa; border: 1px solid #b5c4cc; display: flex; align-items: center; justify-content: center; }
.link { background: #0a9fe8; text-align: center; border: 2px solid #2b6c9b; }
.link a { color: #14375d; font-size: 19px; font-weight: 700; text-decoration: none; }
td.active { border: 3px solid #1b1b1b; border-left-color: #98a2ad; border-right: 0; }
.chart { position: absolute; font-family: "Open Sans", "DejaVu Sans Condensed", "DejaVu Sans", sans-serif; font-size: 16px; fill: #333; }
.ctitle { font-family: "DejaVu Sans Condensed", "DejaVu Sans", sans-serif; font-size: 24px; font-weight: 700; fill: #111; }
.barchart { right: 1205px; top: 299px; }
.piechart { right: 701px; top: 42px; }
.linechart { right: 469px; top: 506px; }
.pointer { position: absolute; right: 1393px; top: 265px; }

.sheettabs { display: flex; height: 23px; padding-left: 21px; background: #dde2eb; border-bottom: 1px solid #b6bac1; align-items: stretch; font-size: 16px; color: #777c85; }
.hscroll { flex: 1; display: flex; align-items: center; }
.mini { flex: none; width: 12px; height: 20px; background: #fff; border: 2px solid #8e9298; }
.left, .right { border: 6px solid transparent; margin: 0 6px; }
.left { border-left: 0; border-right: 6px solid #333; margin-left: 9px; }
.right { border-right: 0; border-left: 6px solid #333; }
.fill { flex: 1; }
.hthumb { width: 26px; height: 20px; border: 2px solid #a9adb5; background: linear-gradient(90deg, #eee 7px, #bbb 7px, #bbb 15px, #eee 15px); }
.st { width: 84px; line-height: 20px; white-space: nowrap; background: linear-gradient(60deg, transparent 0, transparent 4px, #b5bac3 4px, #b5bac3 5px, transparent 5px); }
.mini + .st { margin-left: 7px; }
.st.wide { width: 247px; }
.st.current { width: 248px; background: #fff; color: #333; font-size: 18px; clip-path: polygon(0 0, 100% 0, 100% 100%, 17px 100%); padding-left: 14px; }
.st.pay { width: 136px; background: #dde0e8; }
.st.main { width: 152px; }
.nav { width: 91px; display: flex; align-items: center; justify-content: center; border-left: 1px solid #b5bac3; }

.status { display: flex; justify-content: space-between; align-items: center; height: 30px; background: linear-gradient(#dfe1e6, #cdd0d5 50%, #b9bcc2); border-bottom: 2px solid #75797d; color: #6a6e74; }
.ready { padding: 0 12px 0 10px; border-right: 1px solid #b9bcc2; }
.view { display: flex; align-items: center; padding-right: 3px; }
.vb { width: 27px; height: 26px; display: flex; align-items: center; justify-content: center; }
.vb.on { background: #fbe98e; border: 1px solid #d9bb4a; border-radius: 3px; }
.pc { margin: 0 12px 0 14px; }
.view input { appearance: none; width: 130px; height: 20px; margin: 0 5px; background: linear-gradient(transparent 9px, #9fa3a9 9px, #9fa3a9 11px, transparent 11px); }
.view input::-webkit-slider-thumb { appearance: none; width: 13px; height: 18px; background: #f4f4f6; border: 1px solid #888; border-radius: 2px 2px 7px 7px; }

.taskbar { position: relative; display: flex; height: 57px; background: linear-gradient(90deg, #060c0f 0, #060c0f 177px, #6d6d4a 250px, #8c8b56 270px, #8f8e5a 690px, #7f7d4b 840px, #6b6a42 920px, #7b7a4a 1000px, #9a9c62 1090px, #5d603e 1150px, #13201f 1210px, #132527 1320px, #0a1417 1400px, #070e11 1900px); }
.tk { width: 87px; display: flex; align-items: center; justify-content: center; flex: none; }
.start { width: 84px; }
.ie { width: 93px; }
.folder { width: 81px; margin-right: 1px; background: linear-gradient(#77797a, #1c1f20); border: 1px solid #a3a5a2; }
.excel { width: 80px; margin: 0 3px 0 6px; background: linear-gradient(120deg, #dfddc0, #b7b68c); border: 1px solid #d9d9bb; }
.mark { position: absolute; left: 845px; top: -17px; font: 700 61px/60px "DejaVu Sans", sans-serif; color: rgba(225, 225, 205, 0.35); pointer-events: none; }
.tray { margin-left: auto; display: flex; align-items: center; color: #ddd; }
.lang { width: 43px; text-align: center; padding-bottom: 6px; }
.ti { width: 34px; display: flex; justify-content: center; }
.clock { width: 112px; margin-right: 5px; display: flex; flex-direction: column; text-align: center; line-height: 23px; }
.peek { width: 16px; height: 56px; margin-right: 8px; background: linear-gradient(90deg, #3a4245, #12191c); border-left: 1px solid #566; }
</style>
